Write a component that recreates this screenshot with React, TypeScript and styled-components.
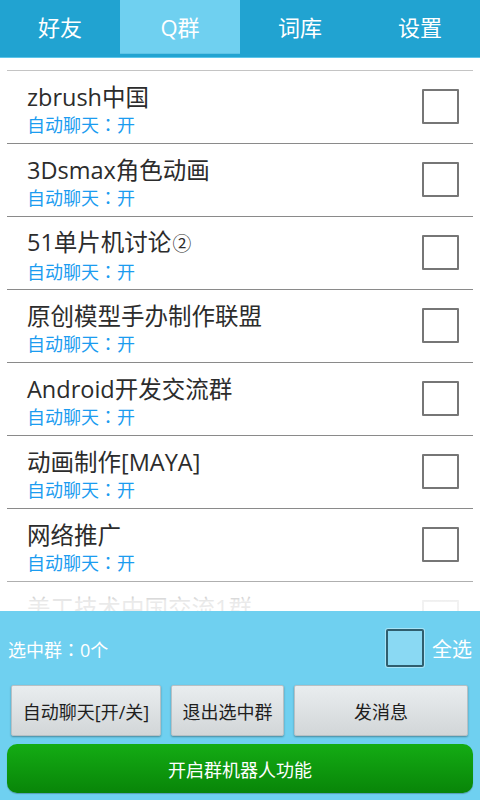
import React from "react";
import styled, { createGlobalStyle } from "styled-components";

const GlobalStyle = createGlobalStyle`
    html, body {
        margin: 0;
        padding: 0;
        background: #ffffff;
    }
    * {
        box-sizing: border-box;
    }
`;

const FONT = `"Open Sans", "Noto Sans CJK SC", sans-serif`;

// Whole phone screen
const Screen = styled.div`
    width: 480px;
    height: 800px;
    display: flex;
    flex-direction: column;
    font-family: ${FONT};
    overflow: hidden;
`;

// Top tabs
const TabBar = styled.div`
    height: 58px;
    flex: none;
    display: flex;
    align-items: flex-start;
    background: #21a3d1;
    border-bottom: 1px solid #5cc5ea;
`;

const Tab = styled.div<{ $active?: boolean }>`
    width: 120px;
    height: ${p => (p.$active ? "54px" : "57px")};
    display: flex;
    align-items: center;
    justify-content: center;
    padding-bottom: ${p => (p.$active ? "0" : "3px")};
    font-size: 22px;
    line-height: 26px;
    color: #ffffff;
    background: ${p => (p.$active ? "#6fd0f0" : "transparent")};
    border-bottom: ${p => (p.$active ? "1px solid #5ec3e6" : "none")};
`;

// Group list
const ListArea = styled.div`
    position: relative;
    flex: 1;
    overflow: hidden;
    padding: 12px 7px 0;
    background: #ffffff;
`;

const TopRule = styled.div`
    height: 1px;
    background: #c4c4c4;
`;

const Row = styled.div`
    height: 73px;
    display: flex;
    align-items: center;
    padding: 0 14px 0 20px;
    border-bottom: 1px solid #8a8a8a;
`;

const RowText = styled.div`
    flex: 1;
    display: flex;
    flex-direction: column;
    padding-top: 5px;
`;

const Title = styled.div`
    font-size: 23.5px;
    line-height: 30px;
    color: #2c2c2c;
    white-space: nowrap;
`;

const Status = styled.div`
    font-size: 18px;
    line-height: 25px;
    color: #1b9cf0;
`;

// fullwidth colon drawn centred, as the phone's font does
const Colon = styled.span`
    font-family: "Noto Sans CJK TC", sans-serif;
`;

const Circled = styled.span`
    font-size: 0.8em;
    margin-left: 1px;
`;

const Box = styled.div`
    width: 37px;
    height: 35px;
    border: 2px solid #767676;
    border-radius: 1px;
    background: #ffffff;
    margin-top: -2px;
`;

const Fade = styled.div`
    position: absolute;
    left: 0;
    right: 0;
    bottom: 0;
    height: 40px;
    background: linear-gradient(to bottom, rgba(255, 255, 255, 0), rgba(255, 255, 255, 0.9) 75%);
    pointer-events: none;
`;

// Bottom panel
const Panel = styled.div`
    height: 189px;
    flex: none;
    background: #6fd0f0;
    display: flex;
    flex-direction: column;
    padding: 0 7px 7px;
`;

const SelectRow = styled.div`
    height: 74px;
    display: flex;
    align-items: center;
    padding: 0 0 0 1px;
    color: #ffffff;
`;

const Count = styled.div`
    flex: 1;
    font-size: 18px;
    padding-top: 1px;
`;

const AllBox = styled.div`
    width: 38px;
    height: 38px;
    border: 2px solid #2f5e6e;
    border-radius: 2px;
    background: #8ad9f3;
    box-shadow: 0 0 0 1px #a8e4f7;
    margin-right: 8px;
`;

const AllLabel = styled.div`
    font-size: 20px;
    padding-right: 1px;
`;

const ButtonRow = styled.div`
    display: flex;
    gap: 10px;
    padding: 0 5px 0 4px;
    height: 51px;
`;

const GrayButton = styled.div<{ $w: number }>`
    width: ${p => p.$w}px;
    height: 51px;
    display: flex;
    align-items: center;
    justify-content: center;
    font-size: 18px;
    color: #1e1e1e;
    background: linear-gradient(to bottom, #e9edef, #d2d6d8);
    border: 1px solid #b7c0c4;
    border-radius: 2px;
    box-shadow: 0 1px 2px rgba(0, 0, 0, 0.35);
`;

const GreenButton = styled.div`
    margin-top: 8px;
    height: 49px;
    display: flex;
    align-items: center;
    justify-content: center;
    font-size: 18px;
    color: #ffffff;
    border-radius: 10px;
    background: linear-gradient(to bottom, #14ac14, #088508);
    box-shadow: 0 1px 1px rgba(0, 0, 0, 0.25);
`;

const groups: string[] = [
    "zbrush中国",
    "3Dsmax角色动画",
    "51单片机讨论②",
    "原创模型手办制作联盟",
    "Android开发交流群",
    "动画制作[MAYA]",
    "网络推广",
    "美工技术中国交流1群",
];

const tabs: string[] = ["好友", "Q群", "词库", "设置"];

const renderTitle = (g: string) =>
    g.endsWith("②") ? <>{g.slice(0, -1)}<Circled>②</Circled></> : g;

const App = () => {
    return (
        <>
            <GlobalStyle />
            <Screen>
                <TabBar>
                    {tabs.map(t => (
                        <Tab key={t} $active={t === "Q群"}>{t}</Tab>
                    ))}
                </TabBar>
                <ListArea>
                    <TopRule />
                    {groups.map(g => (
                        <Row key={g}>
                            <RowText>
                                <Title>{renderTitle(g)}</Title>
                                <Status>自动聊天<Colon>：</Colon>开</Status>
                            </RowText>
                            <Box />
                        </Row>
                    ))}
                    <Fade />
                </ListArea>
                <Panel>
                    <SelectRow>
                        <Count>选中群<Colon>：</Colon>0个</Count>
                        <AllBox />
                        <AllLabel>全选</AllLabel>
                    </SelectRow>
                    <ButtonRow>
                        <GrayButton $w={150}>自动聊天[开/关]</GrayButton>
                        <GrayButton $w={113}>退出选中群</GrayButton>
                        <GrayButton $w={174}>发消息</GrayButton>
                    </ButtonRow>
                    <GreenButton>开启群机器人功能</GreenButton>
                </Panel>
            </Screen>
        </>
    );
};

export default App;
